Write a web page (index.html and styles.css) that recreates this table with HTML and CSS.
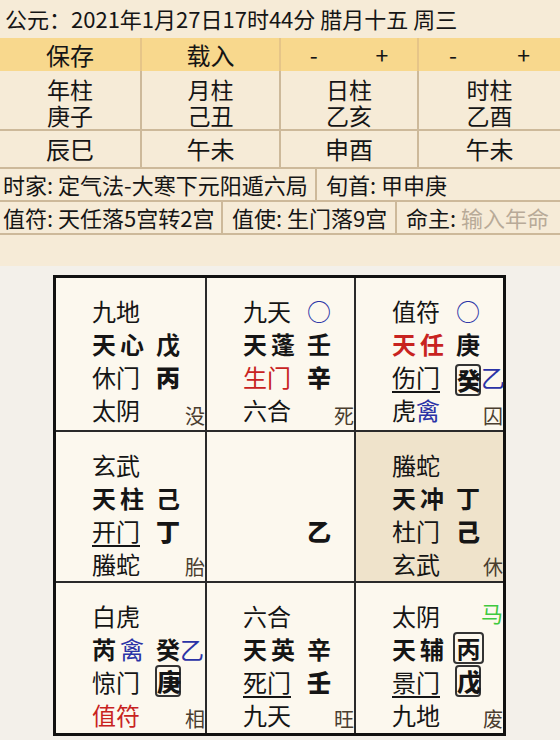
FILE: index.html
```html
<!DOCTYPE html>
<html lang="zh">
<head>
<meta charset="utf-8">
<title>奇门遁甲</title>
<link rel="stylesheet" href="styles.css">
</head>
<body>
<div class="top">
  <div class="date">公元：2021年1月27日17时44分 腊月十五 周三</div>
  <div class="hrow btns">
    <div class="hc w1">保存</div>
    <div class="hc w2">载入</div>
    <div class="hc w3 pm"><span>-</span><span>+</span></div>
    <div class="hc w4 pm"><span>-</span><span>+</span></div>
  </div>
  <div class="hrow pillars">
    <div class="hc w1"><div>年柱</div><div>庚子</div></div>
    <div class="hc w2"><div>月柱</div><div>己丑</div></div>
    <div class="hc w3"><div>日柱</div><div>乙亥</div></div>
    <div class="hc w4"><div>时柱</div><div>乙酉</div></div>
  </div>
  <div class="hrow kong">
    <div class="hc w1">辰巳</div>
    <div class="hc w2">午未</div>
    <div class="hc w3">申酉</div>
    <div class="hc w4">午未</div>
  </div>
  <div class="hrow info">
    <div class="ic i1">时家: 定气法-大寒下元阳遁六局</div>
    <div class="ic">旬首: 甲申庚</div>
  </div>
  <div class="hrow info">
    <div class="ic i2">值符: 天任落5宫转2宫</div>
    <div class="ic i3">值使: 生门落9宫</div>
    <div class="ic">命主: <span class="ph">输入年命</span></div>
  </div>
</div>

<div class="board">
  <div class="grid">
    <div class="cell">
      <div class="ln"><span>九地</span></div>
      <div class="ln"><span class="star">天心</span><span class="cal">戊</span></div>
      <div class="ln"><span>休门</span><span class="hv">丙</span></div>
      <div class="ln"><span>太阴</span></div>
      <span class="corner">没</span>
    </div>
    <div class="cell">
      <div class="ln"><span>九天</span><span class="blue">○</span></div>
      <div class="ln"><span class="star">天蓬</span><span class="cal">壬</span></div>
      <div class="ln"><span class="red">生门</span><span class="hv">辛</span></div>
      <div class="ln"><span>六合</span></div>
      <span class="corner">死</span>
    </div>
    <div class="cell">
      <div class="ln"><span>值符</span><span class="blue">○</span></div>
      <div class="ln"><span class="star red">天任</span><span class="cal">庚</span></div>
      <div class="ln"><span class="ul">伤门</span><span><span class="box hv">癸</span><span class="blue">乙</span></span></div>
      <div class="ln"><span>虎<span class="blue">禽</span></span></div>
      <span class="corner">囚</span>
    </div>

    <div class="cell">
      <div class="ln"><span>玄武</span></div>
      <div class="ln"><span class="star">天柱</span><span class="cal">己</span></div>
      <div class="ln"><span class="ul">开门</span><span class="hv">丁</span></div>
      <div class="ln"><span>螣蛇</span></div>
      <span class="corner">胎</span>
    </div>
    <div class="cell">
      <div class="ln"></div>
      <div class="ln"></div>
      <div class="ln"><span></span><span class="hv">乙</span></div>
      <div class="ln"></div>
    </div>
    <div class="cell tan">
      <div class="ln"><span>螣蛇</span></div>
      <div class="ln"><span class="star">天冲</span><span class="cal">丁</span></div>
      <div class="ln"><span>杜门</span><span class="hv">己</span></div>
      <div class="ln"><span>玄武</span></div>
      <span class="corner">休</span>
    </div>

    <div class="cell">
      <div class="ln"><span>白虎</span></div>
      <div class="ln"><span class="star">芮<span class="blue">禽</span></span><span><span class="cal">癸</span><span class="blue">乙</span></span></div>
      <div class="ln"><span>惊门</span><span class="box hv">庚</span></div>
      <div class="ln"><span class="red">值符</span></div>
      <span class="corner">相</span>
    </div>
    <div class="cell">
      <div class="ln"><span>六合</span></div>
      <div class="ln"><span class="star">天英</span><span class="cal">辛</span></div>
      <div class="ln"><span class="ul">死门</span><span class="hv">壬</span></div>
      <div class="ln"><span>九天</span></div>
      <span class="corner">旺</span>
    </div>
    <div class="cell">
      <div class="ln"><span>太阴</span></div>
      <div class="ln"><span class="star">天辅</span><span class="box wide cal">丙</span></div>
      <div class="ln"><span class="ul">景门</span><span class="box hv">戊</span></div>
      <div class="ln"><span>九地</span></div>
      <span class="ma">马</span>
      <span class="corner">废</span>
    </div>
  </div>
</div>
</body>
</html>
```

FILE: styles.css
```css
* { box-sizing: border-box; }
html, body {
  margin: 0;
  padding: 0;
}
body {
  width: 560px;
  height: 740px;
  background: #f3f0ea;
  font-family: "Noto Sans CJK SC", "Noto Sans", sans-serif;
  color: #151515;
  overflow: hidden;
}

/* ---------- header area ---------- */
.top {
  background: #f6ebd7;
  padding-bottom: 31px;
}
.date {
  height: 38px;
  line-height: 36px;
  font-size: 22px;
  padding-left: 5px;
  white-space: nowrap;
}
.hrow {
  display: flex;
}
.hc {
  text-align: center;
  font-size: 24px;
}
.w1 { width: 140px; }
.w2 { width: 139px; border-left: 2px solid #cdb99a; }
.w3 { width: 138px; border-left: 2px solid #cdb99a; }
.w4 { width: 143px; border-left: 2px solid #cdb99a; }

.btns {
  background: #f8d88d;
  height: 33px;
}
.btns .hc {
  line-height: 33px;
  border-left-color: #e6c588;
}
.btns .w1 { border-left: none; }
.pm {
  display: flex;
  justify-content: space-around;
  font-size: 23px;
}

.pillars {
  height: 60px;
  border-bottom: 2px solid #cdb99a;
}
.pillars .hc {
  font-size: 23px;
  line-height: 26px;
  padding-top: 5px;
}
.kong {
  height: 38px;
  border-bottom: 2px solid #cdb99a;
}
.kong .hc {
  line-height: 36px;
}
.info {
  height: 33px;
  border-bottom: 2px solid #cdb99a;
}
.ic {
  font-size: 22px;
  line-height: 30px;
  padding-left: 4px;
  white-space: nowrap;
}
.i1 { width: 317px; border-right: 2px solid #cdb99a; padding-left: 3px; }
.i2 { width: 223px; border-right: 2px solid #cdb99a; padding-left: 3px; }
.i3 { width: 174px; border-right: 2px solid #cdb99a; padding-left: 9px; }
.info .ic:last-child { padding-left: 9px; }
.ph { color: #b8aa98; }

/* ---------- board ---------- */
.board {
  padding: 9px 0 0 53px;
}
.grid {
  display: grid;
  grid-template-columns: 149px 147px 147px;
  grid-template-rows: 152px 149px 150px;
  gap: 2px;
  width: 453px;
  background: #2a2a2a;
  border: 3px solid #111;
}
.cell {
  position: relative;
  background: #fcf8ee;
  padding: 16px 0 0 36px;
  font-size: 24px;
}
.cell.tan { background: #efe3cb; }
.ln {
  display: grid;
  grid-template-columns: 64px auto;
  height: 33px;
  line-height: 33px;
  white-space: nowrap;
}
.star {
  font-weight: 700;
  letter-spacing: 4px;
}
.cal { font-weight: 700; }
.hv { font-weight: 900; }
.red { color: #c8231f; }
.blue { color: #2a33a6; font-weight: 400; }
.ul {
  text-decoration: underline;
  text-decoration-thickness: 1.5px;
  text-underline-offset: 4px;
}
.box {
  display: inline-block;
  border: 2px solid #333;
  border-radius: 4px;
  line-height: 27px;
  height: 32px;
  padding: 0;
  width: 26px;
  text-align: center;
  vertical-align: middle;
  margin-left: -1px;
}
.box.wide { width: 31px; margin-left: -3px; }
.corner {
  position: absolute;
  right: 0;
  bottom: 2px;
  font-size: 20px;
  line-height: 24px;
  color: #4b3e2f;
}
.ma {
  position: absolute;
  right: 0;
  top: 16px;
  font-size: 22px;
  line-height: 26px;
  color: #3fc93f;
}
```
